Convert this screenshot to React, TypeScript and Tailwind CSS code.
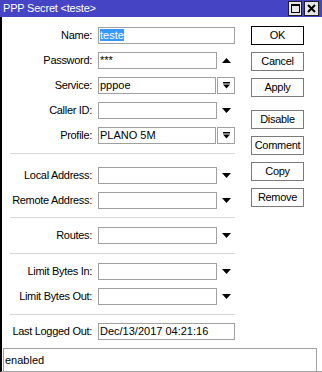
import React from "react";

const Tri = ({ up }: { up?: boolean }) => (
  <svg width="9" height="5" viewBox="0 0 9 5">
    <path d={up ? "M0 5 L4.5 0 L9 5Z" : "M0 0 L9 0 L4.5 5Z"} fill="#000" />
  </svg>
);

const DropIcon = () => (
  <svg width="7" height="7" viewBox="0 0 7 7">
    <rect x="0" y="0" width="7" height="1.5" fill="#000" />
    <path d="M0 2.5 L7 2.5 L3.5 6.5Z" fill="#000" />
  </svg>
);

function Row({ label, children }: { label: string; children: React.ReactNode }) {
  return (
    <div className="flex h-[17px] items-center">
      <div className="w-[90px] text-right tracking-[-0.3px] whitespace-nowrap">{label}</div>
      <div className="ml-[6px] flex h-full">{children}</div>
    </div>
  );
}

const Input = ({ w, children }: { w: string; children?: React.ReactNode }) => (
  <div className={`h-[17px] ${w} border border-[#a0a0a0] px-[1px] leading-[15px] whitespace-nowrap`}>{children}</div>
);

const Arrow = ({ up }: { up?: boolean }) => (
  <div className="flex w-[18px] items-center justify-center">
    <Tri up={up} />
  </div>
);

const DropBox = () => (
  <div className="ml-[1px] flex w-[18px] items-center justify-center border border-[#a0a0a0]">
    <DropIcon />
  </div>
);

const Sep = ({ cls }: { cls: string }) => <div className={`ml-[8px] h-px w-[225px] bg-[#d8d8d8] ${cls}`} />;

const Btn = ({ children, def, cls }: { children: React.ReactNode; def?: boolean; cls?: string }) => (
  <div
    className={`flex h-[19px] w-[53px] items-center justify-center border bg-white tracking-[-0.3px] whitespace-nowrap ${
      def ? "border-black" : "border-[#7a7a7a]"
    } ${cls ?? ""}`}
  >
    {children}
  </div>
);

export default function App() {
  return (
    <div className="relative h-[372px] w-[322px] overflow-hidden bg-white text-[11px] text-black font-['Liberation_Sans',Arial,sans-serif]">
      {/* Title bar */}
      <div className="flex h-[17px] items-center bg-[#4444c4] pl-[3px] pr-[3px]">
        <div className="text-[11px] tracking-[-0.2px] text-white whitespace-nowrap">PPP Secret &lt;teste&gt;</div>
        <div className="ml-auto flex gap-[2px]">
          <div className="flex h-[15px] w-[14px] items-center justify-center border border-[#202020] bg-[#e6e6e6]">
            <div className="h-[9px] w-[9px] border border-black border-t-2" />
          </div>
          <div className="flex h-[15px] w-[15px] items-center justify-center border border-[#202020] bg-[#e6e6e6]">
            <svg width="9" height="9" viewBox="0 0 9 9">
              <path d="M1 1 L8 8 M8 1 L1 8" stroke="#000" strokeWidth="2" />
            </svg>
          </div>
        </div>
      </div>

      {/* Body */}
      <div className="flex border-l-2 border-black">
        <div className="flex w-[233px] flex-col pt-[10px]">
          <div className="flex flex-col gap-[8px]">
            <Row label="Name:">
              <Input w="w-[137px]">
                <span className="bg-[#3399ff] text-white">teste</span>
              </Input>
            </Row>
            <Row label="Password:">
              <Input w="w-[119px]">***</Input>
              <Arrow up />
            </Row>
            <Row label="Service:">
              <Input w="w-[118px]">pppoe</Input>
              <DropBox />
            </Row>
            <Row label="Caller ID:">
              <Input w="w-[119px]" />
              <Arrow />
            </Row>
            <Row label="Profile:">
              <Input w="w-[118px]">PLANO 5M</Input>
              <DropBox />
            </Row>
          </div>
          <Sep cls="mt-[9px] mb-[13px]" />
          <div className="flex flex-col gap-[8px]">
            <Row label="Local Address:">
              <Input w="w-[119px]" />
              <Arrow />
            </Row>
            <Row label="Remote Address:">
              <Input w="w-[119px]" />
              <Arrow />
            </Row>
          </div>
          <Sep cls="mt-[8px] mb-[9px]" />
          <Row label="Routes:">
            <Input w="w-[119px]" />
            <Arrow />
          </Row>
          <Sep cls="mt-[9px] mb-[9px]" />
          <div className="flex flex-col gap-[8px]">
            <Row label="Limit Bytes In:">
              <Input w="w-[119px]" />
              <Arrow />
            </Row>
            <Row label="Limit Bytes Out:">
              <Input w="w-[119px]" />
              <Arrow />
            </Row>
          </div>
          <Sep cls="mt-[9px] mb-[8px]" />
          <Row label="Last Logged Out:">
            <Input w="w-[137px]">Dec/13/2017 04:21:16</Input>
          </Row>
          <div className="h-[8px]" />
        </div>

        <div className="ml-[16px] flex flex-col pt-[9px]">
          <div className="flex flex-col gap-[7px]">
            <Btn def>OK</Btn>
            <Btn>Cancel</Btn>
            <Btn>Apply</Btn>
          </div>
          <div className="mt-[13px] flex flex-col gap-[7px]">
            <Btn>Disable</Btn>
            <Btn>Comment</Btn>
            <Btn>Copy</Btn>
            <Btn>Remove</Btn>
          </div>
        </div>
      </div>

      {/* Status bar */}
      <div className="flex border-b border-[#a0a0a0] border-l-2 border-l-black">
        <div className="ml-[1px] flex h-[23px] w-[314px] items-center border border-b-0 border-[#a0a0a0] pl-[1px]">
          enabled
        </div>
      </div>
    </div>
  );
}
